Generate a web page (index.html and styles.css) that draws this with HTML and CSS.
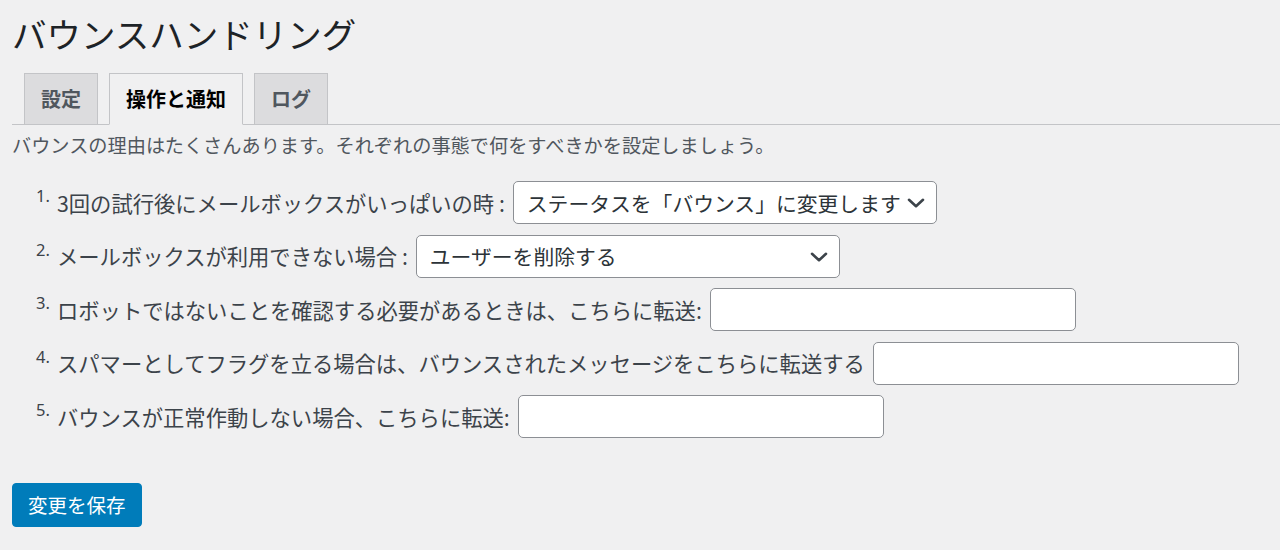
FILE: index.html
```html
<!DOCTYPE html>
<html lang="ja">
  <head>
    <meta charset="UTF-8" />
    <meta name="viewport" content="width=device-width, initial-scale=1.0" />
    <title>バウンスハンドリング</title>
    <link rel="stylesheet" href="styles.css">
  </head>
  <body>
    <div class="wrap">
      <h1>バウンスハンドリング</h1>
      <nav class="nav-tabs">
        <a href="#" class="nav-tab">設定</a>
        <a href="#" class="nav-tab active">操作と通知</a>
        <a href="#" class="nav-tab">ログ</a>
      </nav>
      <p class="intro">バウンスの理由はたくさんあります。それぞれの事態で何をすべきかを設定しましょう。</p>
      <form action="#">
        <ol class="actions">
          <li>
            <span class="num">1.</span>
            <label for="mailbox-full">3回の試行後にメールボックスがいっぱいの時 :</label>
            <span class="select-box">
              <select id="mailbox-full" name="mailbox_full">
                <option>ステータスを「バウンス」に変更します</option>
                <option>ユーザーを削除する</option>
              </select>
              <svg class="chevron" viewBox="0 0 18 10" width="18" height="10"><path d="M2 1.8 L9 8.2 L16 1.8" /></svg>
            </span>
          </li>
          <li>
            <span class="num">2.</span>
            <label for="mailbox-missing">メールボックスが利用できない場合 :</label>
            <span class="select-box">
              <select id="mailbox-missing" name="mailbox_missing">
                <option>ユーザーを削除する</option>
                <option>ステータスを「バウンス」に変更します</option>
              </select>
              <svg class="chevron" viewBox="0 0 18 10" width="18" height="10"><path d="M2 1.8 L9 8.2 L16 1.8" /></svg>
            </span>
          </li>
          <li>
            <span class="num">3.</span>
            <label for="fwd-captcha">ロボットではないことを確認する必要があるときは、こちらに転送:</label>
            <input type="text" id="fwd-captcha" name="fwd_captcha" />
          </li>
          <li>
            <span class="num">4.</span>
            <label for="fwd-spam">スパマーとしてフラグを立る場合は、バウンスされたメッセージをこちらに転送する</label>
            <input type="text" id="fwd-spam" name="fwd_spam" />
          </li>
          <li>
            <span class="num">5.</span>
            <label for="fwd-broken">バウンスが正常作動しない場合、こちらに転送:</label>
            <input type="text" id="fwd-broken" name="fwd_broken" />
          </li>
        </ol>
        <p class="submit">
          <button type="submit" class="button-primary">変更を保存</button>
        </p>
      </form>
    </div>
  </body>
</html>
```

FILE: styles.css
```css
* {
  box-sizing: border-box;
  margin: 0;
  padding: 0;
}
body {
  font-family: "Noto Sans CJK JP", "Noto Sans", sans-serif;
  background-color: #f0f0f1;
  color: #3c434a;
}
.wrap {
  padding-left: 12px;
}
h1 {
  margin-top: 13px;
  font-size: 34.5px;
  font-weight: 400;
  line-height: 41px;
  color: #1d2327;
}

/* tabs */
.nav-tabs {
  display: flex;
  gap: 11px;
  margin-top: 19px;
  padding-left: 12px;
  border-bottom: 1px solid #c3c4c7;
}
.nav-tab {
  display: block;
  margin-bottom: -1px;
  padding: 0 16px;
  font-size: 20px;
  font-weight: 700;
  line-height: 50px;
  color: #50575e;
  text-decoration: none;
  background-color: #dcdcde;
  border: 1px solid #c3c4c7;
}
.nav-tab.active {
  color: #000;
  background-color: #f0f0f1;
  border-bottom-color: #f0f0f1;
}

.intro {
  margin-top: 6px;
  font-size: 19.2px;
  line-height: 28px;
  color: #50575e;
}

/* numbered rows */
.actions {
  list-style: none;
  margin-top: 22px;
}
.actions li {
  display: flex;
  align-items: center;
  height: 43px;
  margin-bottom: 10.5px;
  padding-left: 24px;
}
.actions li:last-child {
  margin-bottom: 0;
}
.num {
  width: 21px;
  margin-bottom: 12px;
  font-family: "Noto Sans", sans-serif;
  font-size: 16.5px;
  line-height: 1;
  color: #3c434a;
}
.actions label {
  margin-right: 8px;
  font-size: 21.3px;
  line-height: 30px;
  white-space: nowrap;
}

.select-box {
  position: relative;
  display: block;
}
.select-box select {
  display: block;
  width: 424px;
  height: 43px;
  padding: 0 28px 0 13px;
  font-family: inherit;
  font-size: 20.8px;
  color: #2c3338;
  background-color: #fff;
  border: 1px solid #8c8f94;
  border-radius: 5px;
  appearance: none;
  -webkit-appearance: none;
  outline: none;
}
.chevron {
  position: absolute;
  right: 12px;
  top: 17px;
  pointer-events: none;
}
.chevron path {
  fill: none;
  stroke: #3c434a;
  stroke-width: 2.6;
  stroke-linecap: round;
  stroke-linejoin: round;
}

.actions input {
  display: block;
  width: 366px;
  height: 43px;
  padding: 0 12px;
  font-family: inherit;
  font-size: 20px;
  background-color: #fff;
  border: 1px solid #8c8f94;
  border-radius: 5px;
  outline: none;
}

.submit {
  margin-top: 45px;
}
.button-primary {
  height: 44px;
  padding: 0 15px;
  font-family: inherit;
  font-size: 19.5px;
  line-height: 42px;
  color: #fff;
  background-color: #007cba;
  border: 1px solid #007cba;
  border-radius: 4px;
  cursor: pointer;
}
```
